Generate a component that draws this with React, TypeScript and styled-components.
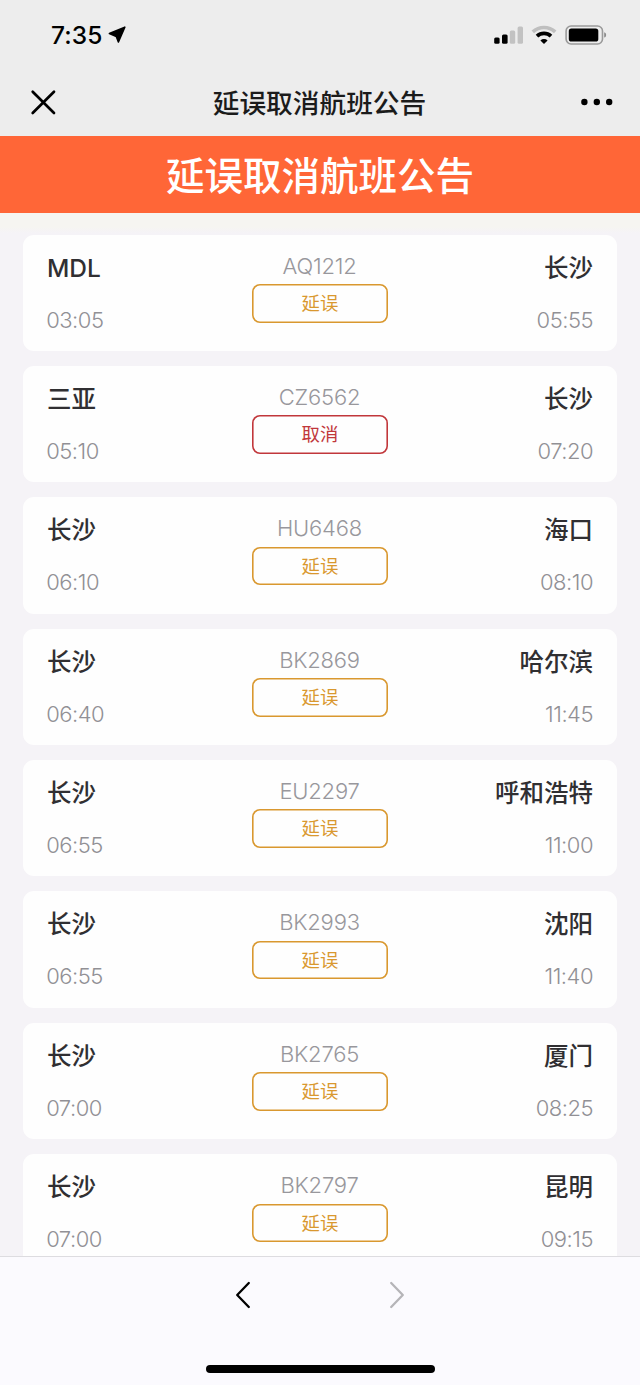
import React from "react";
import styled, { createGlobalStyle } from "styled-components";

const GlobalStyle = createGlobalStyle`
  * { box-sizing: border-box; }
  body {
    margin: 0;
    font-family: Inter, "Noto Sans CJK SC", sans-serif;
    background: #f5f3f7;
  }
`;

const Screen = styled.div`
  display: flex;
  flex-direction: column;
  width: 640px;
  height: 1385px;
  overflow: hidden;
`;

const TopArea = styled.header`
  flex: none;
  height: 136px;
  background: #ededed;
`;

const StatusBar = styled.div`
  display: flex;
  align-items: center;
  justify-content: space-between;
  height: 70px;
  padding: 0 33px 0 51px;
`;

const Clock = styled.div`
  display: flex;
  align-items: center;
  gap: 5px;
  font-size: 24.5px;
  font-weight: 500;
  line-height: 30px;
  letter-spacing: 0.1px;
  color: #000;
`;

const StatusIcons = styled.div`
  display: flex;
  align-items: center;
`;

const NavBar = styled.div`
  display: grid;
  grid-template-columns: 60px 1fr 60px;
  align-items: center;
  height: 64px;
  padding: 0 26px 0 28px;
`;

const NavTitle = styled.h1`
  margin: 0;
  padding: 1px 3px 0 0;
  text-align: center;
  font-size: 26.7px;
  font-weight: 500;
  line-height: 36px;
  color: #1b1b1b;
`;

const NavEnd = styled.div`
  display: flex;
  justify-content: flex-end;
`;

const Banner = styled.h2`
  flex: none;
  display: flex;
  align-items: center;
  justify-content: center;
  height: 77px;
  margin: 0;
  padding-top: 2px;
  font-size: 38.5px;
  font-weight: 500;
  line-height: 56px;
  color: #fff;
  background: #ff6637;
`;

const Page = styled.main`
  flex: 1;
  min-height: 0;
  overflow: hidden;
  background: linear-gradient(#f6f5f1 0 14px, #f5f3f7 20px);
`;

const FlightList = styled.ul`
  display: flex;
  flex-direction: column;
  gap: 15.2px;
  margin: 0;
  padding: 21.6px 23px 0;
  list-style: none;
`;

const FlightCard = styled.li`
  flex: none;
  display: grid;
  grid-template-columns: 1fr 136px 1fr;
  height: 116.2px;
  padding: 15px 24px 0;
  border-radius: 11px;
  background: #fefefe;
`;

const Stop = styled.div<{ $end?: boolean }>`
  display: flex;
  flex-direction: column;
  gap: 16.6px;
  text-align: ${(p) => (p.$end ? "right" : "left")};
`;

const City = styled.div`
  font-size: 24.5px;
  font-weight: 500;
  line-height: 36.4px;
  color: #302f32;
`;

const Time = styled.div`
  margin-left: -0.8px;
  font-size: 22px;
  font-weight: 300;
  line-height: 34px;
  letter-spacing: -0.5px;
  color: #919095;
`;

const Middle = styled.div`
  display: flex;
  flex-direction: column;
  align-items: center;
  gap: 2.4px;
`;

const FlightNo = styled.div`
  margin-left: -1px;
  font-size: 22px;
  font-weight: 300;
  line-height: 32px;
  letter-spacing: -0.2px;
  color: #98979c;
`;

const StatusTag = styled.div<{ $cancelled: boolean }>`
  width: 136px;
  height: 38.6px;
  border-radius: 8px;
  box-shadow: inset 0 0 0 1.6px currentColor;
  text-align: center;
  font-size: 18.4px;
  line-height: 39.4px;
  color: ${(p) => (p.$cancelled ? "#c1373b" : "#d9982f")};
`;

const BottomBar = styled.footer`
  flex: none;
  display: flex;
  flex-direction: column;
  align-items: center;
  justify-content: space-between;
  height: 129px;
  padding: 24px 0 12px;
  border-top: 1px solid #dddce0;
  background: #fbfafe;
`;

const PageControls = styled.div`
  display: flex;
  gap: 136px;
`;

const HomeIndicator = styled.div`
  width: 229px;
  height: 8px;
  border-radius: 4px;
  background: #000;
`;

type Flight = {
  from: string;
  depart: string;
  no: string;
  status: "延误" | "取消";
  to: string;
  arrive: string;
};

const flights: Flight[] = [
  { from: "MDL", depart: "03:05", no: "AQ1212", status: "延误", to: "长沙", arrive: "05:55" },
  { from: "三亚", depart: "05:10", no: "CZ6562", status: "取消", to: "长沙", arrive: "07:20" },
  { from: "长沙", depart: "06:10", no: "HU6468", status: "延误", to: "海口", arrive: "08:10" },
  { from: "长沙", depart: "06:40", no: "BK2869", status: "延误", to: "哈尔滨", arrive: "11:45" },
  { from: "长沙", depart: "06:55", no: "EU2297", status: "延误", to: "呼和浩特", arrive: "11:00" },
  { from: "长沙", depart: "06:55", no: "BK2993", status: "延误", to: "沈阳", arrive: "11:40" },
  { from: "长沙", depart: "07:00", no: "BK2765", status: "延误", to: "厦门", arrive: "08:25" },
  { from: "长沙", depart: "07:00", no: "BK2797", status: "延误", to: "昆明", arrive: "09:15" },
];

const LocationIcon = () => (
  <svg width="18" height="18" viewBox="0 0 18 18">
    <path d="M16.8 1.2 L10.4 16 L8.3 10.4 L1.4 7.6 Z" fill="#000" stroke="#000" strokeWidth="1.6" strokeLinejoin="round" />
  </svg>
);

const SystemIcons = () => (
  <svg width="114" height="22" viewBox="0 0 114 22">
    <rect x="1.2" y="13.4" width="5.4" height="6.4" rx="1.5" />
    <rect x="9" y="10.4" width="5.6" height="9.4" rx="1.5" />
    <rect x="16.8" y="6.4" width="5.4" height="13.4" rx="1.5" fill="#c2c2c2" />
    <rect x="24.6" y="2.4" width="5.4" height="17.4" rx="1.5" fill="#c2c2c2" />
    <path d="M39.8 7.9 A16.6 16.6 0 0 1 62.2 7.9" fill="none" stroke="#bfbfbf" strokeWidth="3.6" />
    <path d="M44 12.1 A10.4 10.4 0 0 1 58 12.1" fill="none" stroke="#000" strokeWidth="3.8" />
    <path d="M47.4 16.4 A5.2 5.2 0 0 1 54.6 16.4 L51 20 Z" />
    <rect x="73.1" y="2" width="36.4" height="18" rx="5" fill="none" stroke="#9a9a9a" strokeWidth="1.6" />
    <rect x="75.8" y="4.4" width="29.5" height="13.2" rx="2.6" />
    <path d="M111.2 8.2 C113.8 8.8 113.8 13 111.2 13.6 Z" fill="#8c8c8c" />
  </svg>
);

const CloseIcon = () => (
  <svg width="30" height="30" viewBox="0 0 30 30">
    <path d="M4.7 4.7 L26 26 M26 4.7 L4.7 26" stroke="#000" strokeWidth="2.7" strokeLinecap="round" />
  </svg>
);

const MoreIcon = () => (
  <svg width="34" height="10" viewBox="0 0 34 10">
    <circle cx="4.4" cy="5" r="3.2" />
    <circle cx="16.8" cy="5" r="3.2" />
    <circle cx="29.2" cy="5" r="3.2" />
  </svg>
);

const BackIcon = () => (
  <svg width="18" height="28" viewBox="0 0 18 28">
    <path d="M14.8 2 L3.2 14 L14.8 26" fill="none" stroke="#000" strokeWidth="2.3" strokeLinecap="round" strokeLinejoin="round" />
  </svg>
);

const ForwardIcon = () => (
  <svg width="18" height="28" viewBox="0 0 18 28">
    <path d="M3.2 2 L14.8 14 L3.2 26" fill="none" stroke="#b5b4b8" strokeWidth="2.3" strokeLinecap="round" strokeLinejoin="round" />
  </svg>
);

export default function App() {
  return (
    <>
      <GlobalStyle />
      <Screen>
        <TopArea>
          <StatusBar>
            <Clock>
              7:35
              <LocationIcon />
            </Clock>
            <StatusIcons>
              <SystemIcons />
            </StatusIcons>
          </StatusBar>
          <NavBar>
            <CloseIcon />
            <NavTitle>延误取消航班公告</NavTitle>
            <NavEnd>
              <MoreIcon />
            </NavEnd>
          </NavBar>
        </TopArea>
        <Banner>延误取消航班公告</Banner>
        <Page>
          <FlightList>
            {flights.map((f) => (
              <FlightCard key={f.no}>
                <Stop>
                  <City>{f.from}</City>
                  <Time>{f.depart}</Time>
                </Stop>
                <Middle>
                  <FlightNo>{f.no}</FlightNo>
                  <StatusTag $cancelled={f.status === "取消"}>{f.status}</StatusTag>
                </Middle>
                <Stop $end>
                  <City>{f.to}</City>
                  <Time>{f.arrive}</Time>
                </Stop>
              </FlightCard>
            ))}
          </FlightList>
        </Page>
        <BottomBar>
          <PageControls>
            <BackIcon />
            <ForwardIcon />
          </PageControls>
          <HomeIndicator />
        </BottomBar>
      </Screen>
    </>
  );
}
